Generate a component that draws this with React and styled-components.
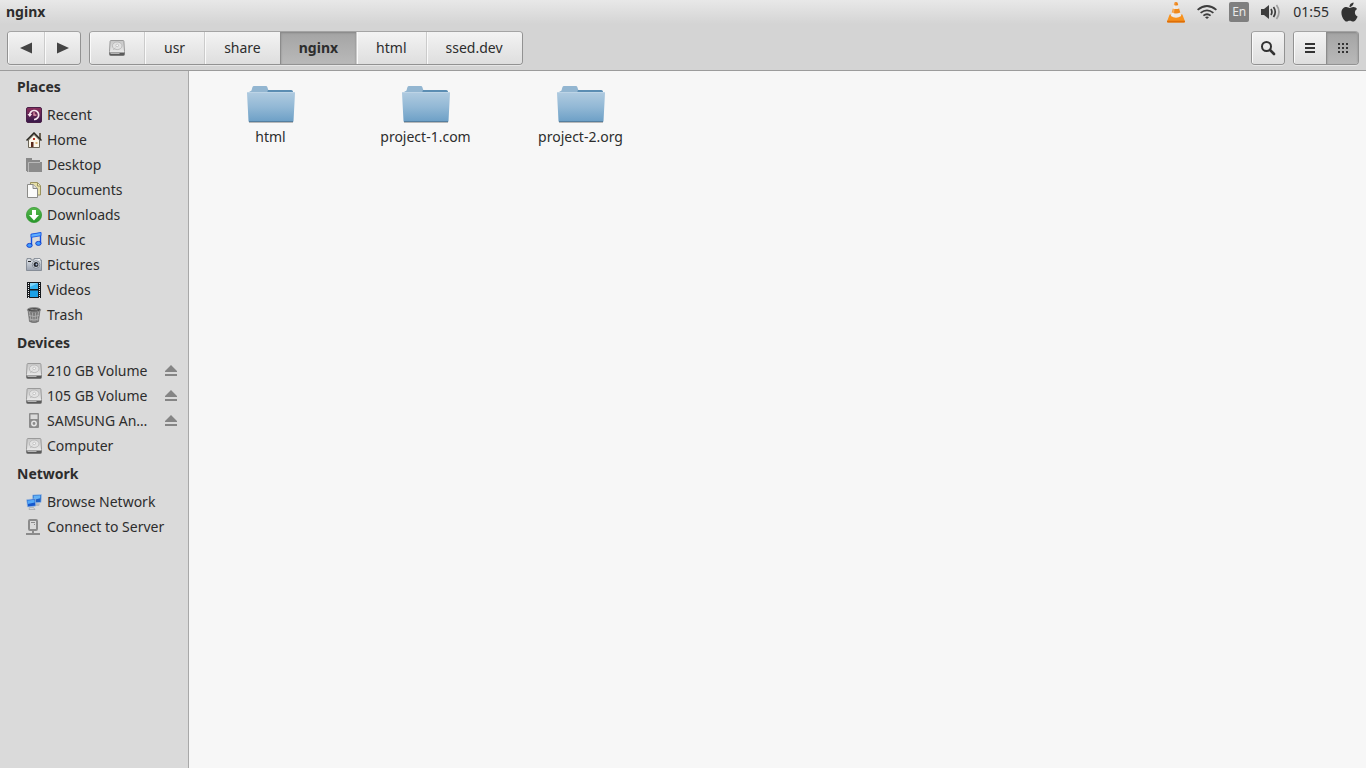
import React from 'react'
import styled, { createGlobalStyle } from 'styled-components'
import { FaApple } from 'react-icons/fa'

const places = [
  { name: 'Recent', icon: RecentIcon },
  { name: 'Home', icon: HomeIcon },
  { name: 'Desktop', icon: DesktopIcon },
  { name: 'Documents', icon: DocumentsIcon },
  { name: 'Downloads', icon: DownloadsIcon },
  { name: 'Music', icon: MusicIcon },
  { name: 'Pictures', icon: PicturesIcon },
  { name: 'Videos', icon: VideosIcon },
  { name: 'Trash', icon: TrashIcon },
]

const devices = [
  { name: '210 GB Volume', icon: DriveIcon, eject: true },
  { name: '105 GB Volume', icon: DriveIcon, eject: true },
  { name: 'SAMSUNG An…', icon: PlayerIcon, eject: true },
  { name: 'Computer', icon: DriveIcon },
]

const network = [
  { name: 'Browse Network', icon: NetworkIcon },
  { name: 'Connect to Server', icon: ServerIcon },
]

const crumbs = ['usr', 'share', 'nginx', 'html', 'ssed.dev']
const folders = ['html', 'project-1.com', 'project-2.org']

function App() {
  return (
    <Window>
      <GlobalStyle />
      <Header>
        <TopPanel>
          <Title>nginx</Title>
          <Indicators>
            <VlcIcon />
            <WifiIcon />
            <Language>En</Language>
            <SpeakerIcon />
            <Clock>01:55</Clock>
            <AppleIcon />
          </Indicators>
        </TopPanel>
        <Toolbar>
          <ButtonGroup>
            <ToolButton $width={36} aria-label="Back">
              <svg width="12" height="12" viewBox="0 0 12 12"><path d="M0 6 12 .5v11z" fill="#444" /></svg>
            </ToolButton>
            <ToolButton $width={36} aria-label="Forward">
              <svg width="12" height="12" viewBox="0 0 12 12"><path d="M12 6 0 .5v11z" fill="#444" /></svg>
            </ToolButton>
          </ButtonGroup>
          <ButtonGroup>
            <ToolButton $width={54} aria-label="File system"><DriveIcon /></ToolButton>
            {crumbs.map(name => (
              <Crumb key={name} $active={name === 'nginx'}>{name}</Crumb>
            ))}
          </ButtonGroup>
          <Spacer />
          <ButtonGroup>
            <ToolButton $width={32} aria-label="Search">
              <svg width="16" height="16" viewBox="0 0 16 16" fill="none" stroke="#333">
                <circle cx="6.5" cy="6.5" r="4.5" strokeWidth="2" />
                <path d="m10 10 4 4" strokeWidth="2.6" strokeLinecap="round" />
              </svg>
            </ToolButton>
          </ButtonGroup>
          <ButtonGroup>
            <ToolButton $width={32} aria-label="List view">
              <svg width="10" height="10" viewBox="0 0 10 10"><path d="M0 0h10v2H0zM0 4h10v2H0zM0 8h10v2H0z" fill="#333" /></svg>
            </ToolButton>
            <ToolButton $width={32} $active aria-label="Icon view">
              <svg width="10" height="10" viewBox="0 0 10 10">
                <path d="M0 0h2v2H0zM4 0h2v2H4zM8 0h2v2H8zM0 4h2v2H0zM4 4h2v2H4zM8 4h2v2H8zM0 8h2v2H0zM4 8h2v2H4zM8 8h2v2H8z" fill="#333" />
              </svg>
            </ToolButton>
          </ButtonGroup>
        </Toolbar>
      </Header>
      <Body>
        <Sidebar>
          <Section title="Places" items={places} />
          <Section title="Devices" items={devices} />
          <Section title="Network" items={network} />
        </Sidebar>
        <Files>
          {folders.map(name => (
            <Folder key={name}>
              <FolderIcon />
              <span>{name}</span>
            </Folder>
          ))}
        </Files>
      </Body>
    </Window>
  )
}

export default App

function Section({ title, items }) {
  return (
    <section>
      <Heading>{title}</Heading>
      {items.map(({ name, icon: Icon, eject }) => (
        <Item key={name}>
          <ItemLink href="#">
            <Icon />
            <span>{name}</span>
          </ItemLink>
          {eject && (
            <EjectButton aria-label={`Eject ${name}`}>
              <svg width="12" height="11" viewBox="0 0 12 11"><path d="M6 0 12 6v1H0V6zM0 9h12v2H0z" fill="#858585" /></svg>
            </EjectButton>
          )}
        </Item>
      ))}
    </section>
  )
}

// ---- icons ----

function RecentIcon() {
  return (
    <svg width="16" height="16" viewBox="0 0 16 16">
      <defs>
        <linearGradient id="recent" x1="0" y1="0" x2="0" y2="1">
          <stop offset="0" stopColor="#8c2f5c" /><stop offset="1" stopColor="#35194a" />
        </linearGradient>
      </defs>
      <rect x=".5" y=".5" width="15" height="15" rx="1.5" fill="url(#recent)" stroke="#4a2148" />
      <path d="M3.7 8.5A4.5 4.5 0 1 1 8 12.5" fill="none" stroke="#f5e6ef" strokeWidth="1.7" />
      <path d="M1.5 7h4.6L3.8 10z" fill="#f5e6ef" />
      <path d="M8 5.2v3h2.4" fill="none" stroke="#f3a7b5" strokeWidth="1.2" />
    </svg>
  )
}

function HomeIcon() {
  return (
    <svg width="16" height="16" viewBox="0 0 16 16">
      <path d="M13 1h2v6h-2z" fill="#6b6252" />
      <path d="M2.5 8 8 2.5 13.5 8v7.5h-11z" fill="#fbf6e9" stroke="#6b6557" />
      <path d="M.5 8.5 8 1l7.5 7.5" fill="none" stroke="#29261f" strokeWidth="1.5" />
      <path d="M5 10h2.5v5H5z" fill="#5c2a1c" />
      <path d="M7 6h2v2H7z" fill="#c0392b" />
      <path d="M9.5 10h2v2h-2z" fill="#d9b678" />
    </svg>
  )
}

function DesktopIcon() {
  return (
    <svg width="16" height="16" viewBox="0 0 16 16">
      <path d="M0 1h6v2h8v2H3v9H0z" fill="#898989" />
      <path d="M3 5h13v10H1V4h1v1z" fill="#8b8b8b" />
      <path d="M2.5 15V5.5H14" fill="none" stroke="#b9b9b9" />
    </svg>
  )
}

function DocumentsIcon() {
  return (
    <svg width="16" height="16" viewBox="0 0 16 16">
      <path d="M4.5.5h7l3 3v9.5h-10z" fill="#e6dfa8" stroke="#9a925f" />
      <path d="M11.5 1v3h3" fill="#f5f1ce" stroke="#9a925f" />
      <path d="M1.5 2.5H7l4.500 4v9h-10z" fill="#fbfbfa" stroke="#8b8b88" />
      <path d="M7 2.5v4h4.500" fill="#dededc" stroke="#8b8b88" />
    </svg>
  )
}

function DownloadsIcon() {
  return (
    <svg width="16" height="16" viewBox="0 0 16 16">
      <defs>
        <linearGradient id="download" x1="0" y1="0" x2="0" y2="1">
          <stop offset="0" stopColor="#57b84c" /><stop offset="1" stopColor="#27962b" />
        </linearGradient>
      </defs>
      <circle cx="8" cy="8" r="7.6" fill="url(#download)" stroke="#379b35" strokeWidth=".8" />
      <path d="M6 3h4v5h3l-5 5.5L3 8h3z" fill="#fff" />
    </svg>
  )
}

function MusicIcon() {
  return (
    <svg width="16" height="16" viewBox="0 0 16 16">
      <path d="M5.5 13V2.5L14.5 1v10" fill="none" stroke="#1450e0" strokeWidth="1.4" />
      <path d="M5 2.2 15 .5v3.2L5 5.4z" fill="#5fb0ff" stroke="#1450e0" strokeWidth=".8" />
      <ellipse cx="3.5" cy="13.4" rx="2.7" ry="2" fill="#3d9bff" stroke="#1038c4" strokeWidth=".9" />
      <ellipse cx="12.4" cy="11.4" rx="2.7" ry="2" fill="#3d9bff" stroke="#1038c4" strokeWidth=".9" />
    </svg>
  )
}

function PicturesIcon() {
  return (
    <svg width="16" height="16" viewBox="0 0 16 16">
      <defs>
        <linearGradient id="camera" x1="0" y1="0" x2="0" y2="1">
          <stop offset="0" stopColor="#e0e4e9" /><stop offset="1" stopColor="#9aa2b0" />
        </linearGradient>
      </defs>
      <path d="M1 1.5h4V3h3V1.5h6V3h1.5v10.5H.5V3H1z" fill="url(#camera)" stroke="#78808c" strokeWidth=".8" />
      <path d="M2 4h3v1H2z" fill="#222" />
      <circle cx="10" cy="7.5" r="3.7" fill="#f3f5f8" stroke="#65707f" strokeWidth=".8" />
      <circle cx="10" cy="7.5" r="2.5" fill="#20242c" />
      <circle cx="10.5" cy="7.5" r="1" fill="#a9bcdc" />
      <path d="M12 2h2v1h-2z" fill="#f5f5f5" />
    </svg>
  )
}

function VideosIcon() {
  return (
    <svg width="16" height="16" viewBox="0 0 16 16">
      <path d="M1 0h14v16H1z" fill="#14181c" />
      <path d="M4 1h8v6H4z" fill="#37b4f1" />
      <path d="M4 8.5h8V15H4z" fill="#1ba0e6" />
      <path d="M4 1h8L4 5z" fill="#7fd4fa" />
      <path d="M2.5 1v15M13.5 1v15" stroke="#f2f2f2" strokeWidth="1" strokeDasharray="1 1" />
    </svg>
  )
}

function TrashIcon() {
  return (
    <svg width="16" height="16" viewBox="0 0 16 16">
      <path d="m2 3 1.5 11.5q4.5 2.5 9 0L14 3z" fill="#777" stroke="#6d6d6d" strokeWidth=".7" />
      <path d="m3.5 5 1.5 9m1.5-8.5.5 9m2.5-9-.5 9m3.5-9.500-1.5 9M3 8.5q5 2 10 0m-9.500 3.500q4.500 2 9 0" fill="none" stroke="#b5b5b5" strokeWidth=".8" />
      <ellipse cx="8" cy="2.8" rx="6.7" ry="2.3" fill="#505050" stroke="#919191" />
      <path d="m4 3 2-1.500 2 1L11 2l1 1.500z" fill="#858585" />
    </svg>
  )
}

function DriveIcon() {
  return (
    <svg width="16" height="16" viewBox="0 0 16 16">
      <defs>
        <linearGradient id="drive" x1="0" y1="0" x2="0" y2="1">
          <stop offset="0" stopColor="#c6c6c6" /><stop offset="1" stopColor="#f2f2f2" />
        </linearGradient>
      </defs>
      <path d="M2 .5h12q.8 0 .9.8l.6 10.200v3q0 1-1 1h-13q-1 0-1-1v-3l.6-10.200q.1-.8.9-.8z" fill="url(#drive)" stroke="#9a9a9a" />
      <path d="M.5 12.5h15v2q0 1-1 1h-13q-1 0-1-1z" fill="#5a5a5a" />
      <path d="M1.5 13h9v1h-9z" fill="#b5b5b5" />
      <ellipse cx="8.2" cy="5.8" rx="4.8" ry="3.8" fill="#e2e2e2" stroke="#b2b2b2" strokeWidth=".8" />
      <circle cx="8.2" cy="5.4" r="1.3" fill="#fafafa" stroke="#a8a8a8" strokeWidth=".6" />
      <path d="m4 9.500 2.500-1.500" stroke="#bbb" />
    </svg>
  )
}

function PlayerIcon() {
  return (
    <svg width="16" height="16" viewBox="0 0 16 16">
      <path d="M4 0h8q1 0 1 1v13q0 1-1 1H4q-1 0-1-1V1q0-1 1-1m.5 1.500V6h7V1.500z" fill="#8b8b8b" fillRule="evenodd" />
      <circle cx="8" cy="10.5" r="2.2" fill="none" stroke="#e6e6e6" strokeWidth="1.5" />
    </svg>
  )
}

function NetworkIcon() {
  return (
    <svg width="16" height="16" viewBox="0 0 16 16">
      <path d="m10 9 4 .5-1 2.500H9z" fill="#b5b8bc" />
      <path d="m6.5 1 9-.5L15 8.500l-8.500.5z" fill="#1c5fc4" stroke="#a9c4e4" strokeWidth=".7" />
      <path d="m7.5 1.800 7-.6-.3 3L7.500 6z" fill="#64b2f5" />
      <path d="M3.5 13.500h4l1.500 2H3z" fill="#d6d8db" stroke="#8f9297" strokeWidth=".5" />
      <path d="m.7 5.700 8.600-.9.500 7.200-8.300 1z" fill="#1558cd" stroke="#9bbbe0" strokeWidth=".7" />
      <path d="m1.500 6.500 7-.7.300 2.700L1.700 10z" fill="#55a9f7" />
    </svg>
  )
}

function ServerIcon() {
  return (
    <svg width="16" height="16" viewBox="0 0 16 16">
      <rect x="3" y="1" width="8" height="10" rx="1" fill="none" stroke="#8b8b8b" strokeWidth="2" />
      <path d="M5 3.500h4M8 5.500h1" stroke="#8b8b8b" />
      <path d="M6 11h2v3H6zM0 14h14v2H0z" fill="#8b8b8b" />
    </svg>
  )
}

function VlcIcon() {
  return (
    <svg width="18" height="22" viewBox="0 0 18 22">
      <path d="M2.600 13.500h12.800L18 20.500q0 1-1 1H1q-1 0-1-1z" fill="#f7921e" />
      <path d="M0 19.800h18v.7q0 1-1 1H1q-1 0-1-1z" fill="#dd6e08" />
      <path d="M7.500 1.500q1.500-1 3 0l3.700 13.500q-5.200 3.400-10.400 0z" fill="#ece8e4" />
      <path d="M7.500 1.500q1.500-1 3 0l.7 2.500q-2.200 1-4.400 0z" fill="#ee8519" />
      <path d="M5.900 7.500q3.100 1.200 6.200 0l1.200 4q-4.300 2-8.600 0z" fill="#f08a1c" />
      <path d="m7.500 2-3 12.500 2 1L8.500 2z" fill="#fff" fillOpacity=".3" />
    </svg>
  )
}

function WifiIcon() {
  return (
    <svg width="20" height="14" viewBox="0 0 20 14" fill="none" stroke="#3d3d3d" strokeWidth="1.8">
      <path d="M.6 4.900Q10-3 19.400 4.900M3.600 7.900q6.400-5.100 12.800 0M6.400 10.600q3.600-2.800 7.200 0" />
      <path d="M8 12.200q2-1.300 4 0l-2 1.800z" fill="#3d3d3d" stroke="none" />
    </svg>
  )
}

function SpeakerIcon() {
  return (
    <svg width="20" height="16" viewBox="0 0 20 16">
      <path d="M0 5h3l5-4v14l-5-4H0z" fill="#3d3d3d" />
      <g fill="none" strokeWidth="1.7">
        <path d="M10 5q1.800 3 0 6" stroke="#3d3d3d" />
        <path d="M12.500 3q3.500 5 0 10" stroke="#3d3d3d" />
        <path d="M15.500 1q5 7 0 14" stroke="#9f9f9f" />
      </g>
    </svg>
  )
}

function FolderIcon() {
  return (
    <svg width="48" height="38" viewBox="0 0 48 38">
      <defs>
        <linearGradient id="folder" x1="0" y1="0" x2="0" y2="1">
          <stop offset="0" stopColor="#b0cbe0" /><stop offset=".5" stopColor="#92b8d5" /><stop offset="1" stopColor="#6c9fc6" />
        </linearGradient>
      </defs>
      <path d="M2 37.500h44" stroke="#000" strokeOpacity=".25" />
      <path d="M2 7 4.500 5.500 5.500 2q.4-1 1.500-1h12q1 0 1.300 1l1 3H44q1.500 0 2 1.500V30H2z" fill="#93b6d1" />
      <path d="M21 5h23q1.500 0 2 1.500V8H20z" fill="#5b8db3" />
      <path d="M1 7h46q1 0 1 1l-1.500 28q0 1-1 1h-43q-1 0-1-1L0 8q0-1 1-1z" fill="url(#folder)" />
      <path d="M1 7.500h46" stroke="#bdd4e6" />
      <path d="M2 36.500h44" stroke="#557f9f" />
    </svg>
  )
}

const AppleIcon = styled(FaApple)`
  width: 17px;
  height: 22px;
  color: #333;
`

// ---- styles ----

const GlobalStyle = createGlobalStyle`
  * {
    box-sizing: border-box;
  }
  body {
    margin: 0;
    font-family: 'Noto Sans', 'Open Sans', sans-serif;
    font-size: 14px;
    line-height: 20px;
    color: #2d2d2d;
  }
  button {
    font: inherit;
    color: inherit;
    border: 0;
    padding: 0;
    background: none;
  }
  svg {
    display: block;
    flex-shrink: 0;
  }
`

const Window = styled.div`
  min-height: 100vh;
  display: flex;
  flex-direction: column;
`

const Header = styled.header`
  background: linear-gradient(#e8e8e8, #d4d4d4 24px);
  border-bottom: 1px solid #9c9c9c;
`

const TopPanel = styled.div`
  display: flex;
  align-items: center;
  justify-content: space-between;
  height: 24px;
  padding: 0 8px 0 6px;
`

const Title = styled.h1`
  margin: 0;
  font-size: 14px;
  font-weight: 700;
`

const Indicators = styled.div`
  display: flex;
  align-items: center;
  gap: 12px;
`

const Language = styled.span`
  width: 20px;
  height: 20px;
  border-radius: 2px;
  background: #7f7f7f;
  color: #e8e8e8;
  font-size: 12px;
  text-align: center;
`

const Clock = styled.time`
  font-size: 14px;
`

const Toolbar = styled.div`
  display: flex;
  gap: 8px;
  padding: 7px 7px 5px;
`

const Spacer = styled.div`
  flex: 1;
`

const ButtonGroup = styled.div`
  display: flex;
  height: 34px;
  border: 1px solid #929292;
  border-top-color: #a4a4a4;
  border-radius: 4px;
  overflow: hidden;
  box-shadow: 0 1px 0 #e6e6e6;
`

const BarButton = styled.button`
  display: flex;
  align-items: center;
  justify-content: center;
  background: ${props => props.$active ? 'linear-gradient(#a4a4a4, #b9b9b9)' : 'linear-gradient(#f3f3f3, #dedede)'};
  font-weight: ${props => props.$active ? 700 : 400};
  box-shadow: ${props => props.$active ? 'inset 0 1px 2px #858585' : 'inset 1px 0 0 #fafafa'};
  border-left: 1px solid ${props => props.$active ? '#8c8c8c' : '#cbcbcb'};

  &:first-child {
    border-left: 0;
  }
`

const ToolButton = styled(BarButton)`
  width: ${props => props.$width}px;
`

const Crumb = styled(BarButton)`
  padding: 0 ${props => props.$active ? 18 : 19}px;
`

const Body = styled.div`
  flex: 1;
  display: flex;
`

const Sidebar = styled.nav`
  width: 189px;
  background: #dadada;
  border-right: 1px solid #a8a8a8;
`

const Heading = styled.h2`
  margin: 0;
  padding-left: 17px;
  font-size: 14px;
  font-weight: 700;
  line-height: 31px;
`

const Item = styled.div`
  display: flex;
  align-items: center;
  height: 25px;
  padding: 0 11px 0 26px;
`

const ItemLink = styled.a`
  flex: 1;
  display: flex;
  align-items: center;
  gap: 5px;
  color: inherit;
  text-decoration: none;
  white-space: nowrap;
`

const EjectButton = styled.button`
  cursor: pointer;
`

const Files = styled.main`
  flex: 1;
  display: flex;
  flex-wrap: wrap;
  align-content: flex-start;
  padding: 14px 4px;
  background: #f7f7f7;
`

const Folder = styled.button`
  display: flex;
  flex-direction: column;
  align-items: center;
  gap: 4px;
  width: 155px;
`
